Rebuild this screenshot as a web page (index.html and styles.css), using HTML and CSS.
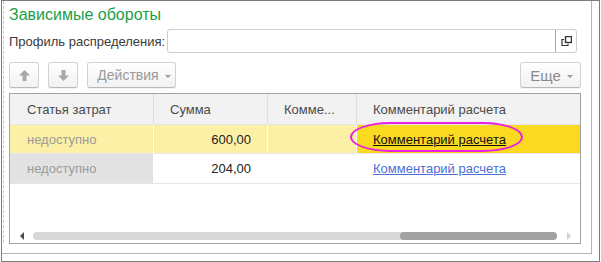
FILE: index.html
```html
<!DOCTYPE html>
<html lang="ru">
<head>
<meta charset="utf-8">
<link rel="stylesheet" href="styles.css">
</head>
<body>
<div class="outer">
  <div class="panel">
    <div class="content">
      <div class="title">Зависимые обороты</div>
      <div class="field-row">
        <div class="label">Профиль распределения:</div>
        <div class="input">
          <div class="input-text"></div>
          <div class="input-btn">
            <svg width="11" height="10" viewBox="0 0 11 10">
              <rect x="4.5" y="0.5" width="6" height="6" fill="none" stroke="#333" stroke-width="1.4"/>
              <path d="M3 3.5 H1 V9.5 H7 V8" fill="none" stroke="#333" stroke-width="1.2"/>
            </svg>
          </div>
        </div>
      </div>
      <div class="toolbar">
        <div class="btn btn-icon">
          <svg width="11" height="11" viewBox="0 0 11 11"><path d="M5.5 0 L11 5.5 H7.5 V11 H3.5 V5.5 H0 Z" fill="#a8a8a8"/></svg>
        </div>
        <div class="btn btn-icon">
          <svg width="11" height="11" viewBox="0 0 11 11"><path d="M5.5 11 L11 5.5 H7.5 V0 H3.5 V5.5 H0 Z" fill="#a8a8a8"/></svg>
        </div>
        <div class="btn btn-menu actions">Действия <span class="caret"></span></div>
        <div class="spacer"></div>
        <div class="btn btn-menu more">Еще <span class="caret"></span></div>
      </div>
      <div class="table">
        <div class="row head">
          <div class="cell">Статья затрат</div>
          <div class="cell">Сумма</div>
          <div class="cell">Комме...</div>
          <div class="cell">Комментарий расчета</div>
        </div>
        <div class="row row-sel">
          <div class="cell muted">недоступно</div>
          <div class="cell num">600,00</div>
          <div class="cell"></div>
          <div class="cell current"><span class="link-cur">Комментарий расчета</span></div>
        </div>
        <div class="row row-plain">
          <div class="cell muted grey">недоступно</div>
          <div class="cell num">204,00</div>
          <div class="cell"></div>
          <div class="cell"><span class="link">Комментарий расчета</span></div>
        </div>
        <div class="table-fill"></div>
        <div class="hscroll">
          <span class="arr-left"></span>
          <div class="track"><div class="thumb"></div></div>
          <span class="arr-right"></span>
        </div>
        <div class="ellipse"></div>
      </div>
    </div>
  </div>
</div>
</body>
</html>
```
FILE: styles.css
```css
html, body {
  margin: 0;
  padding: 0;
  background: #fff;
}
body {
  font-family: "Liberation Sans", Arial, sans-serif;
  font-size: 13px;
  color: #333;
  width: 601px;
  height: 262px;
  overflow: hidden;
}
.outer {
  margin-left: 1px;
  width: 599px;
  height: 262px;
  box-sizing: border-box;
  border: 1px solid #7c7c7c;
}
.panel {
  width: 590px;
  height: 253px;
  box-sizing: border-box;
  border-right: 1px solid #b4b4b4;
  border-bottom: 1px solid #b4b4b4;
  padding-left: 1px;
}
.content {
  height: 242px;
  border-left: 1px dashed #c8c8c8;
  padding-left: 5px;
  padding-top: 5px;
  box-sizing: border-box;
}
.title {
  font-size: 16px;
  line-height: 18px;
  height: 18px;
  color: #1aa04a;
}
.field-row {
  display: flex;
  align-items: center;
  margin-top: 5px;
  height: 24px;
}
.label {
  width: 158px;
  flex: none;
  color: #3a3a3a;
}
.input {
  width: 410px;
  flex: none;
  height: 24px;
  box-sizing: border-box;
  border: 1px solid #cfcfcf;
  border-radius: 3px;
  display: flex;
}
.input-text { flex: 1; }
.input-btn {
  width: 20px;
  border-left: 1px solid #a8a8a8;
  display: flex;
  align-items: center;
  justify-content: center;
}
.toolbar {
  display: flex;
  margin-top: 9px;
  height: 26px;
  width: 572px;
}
.btn {
  flex: none;
  height: 26px;
  box-sizing: border-box;
  border: 1px solid #d2d2d2;
  border-bottom-color: #b8b8b8;
  border-radius: 3px;
  background: linear-gradient(#ffffff, #f2f2f2);
  box-shadow: 0 1px 0 rgba(0,0,0,0.06);
  display: flex;
  align-items: center;
  justify-content: center;
  color: #9a9a9a;
}
.btn-icon {
  width: 30px;
  margin-right: 9px;
}
.btn-menu {
  padding: 0 8px 0 13px;
  font-size: 14px;
}
.actions { width: 89px; }
.more { width: 61px; color: #8a8a8a; font-size: 15px; padding: 0 6px 0 8px; }
.caret {
  display: inline-block;
  width: 0;
  height: 0;
  border-left: 3px solid transparent;
  border-right: 3px solid transparent;
  border-top: 3px solid #9a9a9a;
  margin-left: 6px;
  margin-top: 2px;
}
.spacer { flex: 1; }
.table {
  position: relative;
  margin-top: 5px;
  width: 572px;
  height: 151px;
  box-sizing: border-box;
  border: 1px solid #a2a2a2;
  display: flex;
  flex-direction: column;
}
.row {
  display: grid;
  grid-template-columns: 144px 114px 89px 1fr;
}
.cell {
  box-sizing: border-box;
  border-right: 1px solid #fff;
  padding: 0 16px;
  display: flex;
  align-items: center;
  white-space: nowrap;
  overflow: hidden;
}
.cell:last-child { border-right: none; }
.head {
  height: 30px;
  background: #f2f2f2;
  border-bottom: 1px solid #e6e6e6;
  color: #4a4a4a;
}
.head .cell {
  border-right-color: #dedede;
  padding-top: 1px;
}
.head .cell:first-child { padding-left: 17px; }
.row-sel {
  height: 28px;
  background: #fcf0a6;
  border-bottom: 1px solid #e8e8e8;
}
.row-plain {
  height: 29px;
  border-bottom: 1px solid #e6e6e6;
}
.muted { color: #9a9a9a; padding-left: 17px; }
.grey { background: #e2e2e2; }
.num { justify-content: flex-end; padding-right: 16px; color: #222; }
.current { background: #fad921; }
.link-cur { color: #111; text-decoration: underline; }
.link { color: #4a6fd6; text-decoration: underline; }
.table-fill { flex: 1; }
.hscroll {
  display: flex;
  align-items: center;
  height: 8px;
  margin-bottom: 3px;
  padding-left: 10px;
}
.arr-left {
  width: 0;
  height: 0;
  border-top: 4px solid transparent;
  border-bottom: 4px solid transparent;
  border-right: 4px solid #4a4a4a;
  margin-right: 9px;
}
.track {
  width: 524px;
  height: 8px;
  border-radius: 4px;
  background: #d8d8d8;
  display: flex;
  justify-content: flex-end;
}
.thumb {
  width: 157px;
  height: 8px;
  border-radius: 4px;
  background: #a2a2a2;
}
.arr-right {
  width: 0;
  height: 0;
  border-top: 4px solid transparent;
  border-bottom: 4px solid transparent;
  border-left: 4px solid #d0d0d0;
  margin-left: 10px;
}
.ellipse {
  position: absolute;
  left: 340px;
  top: 28px;
  width: 173px;
  height: 30px;
  box-sizing: border-box;
  border: 2px solid #e81ee0;
  border-radius: 40px / 15px;
}
```
